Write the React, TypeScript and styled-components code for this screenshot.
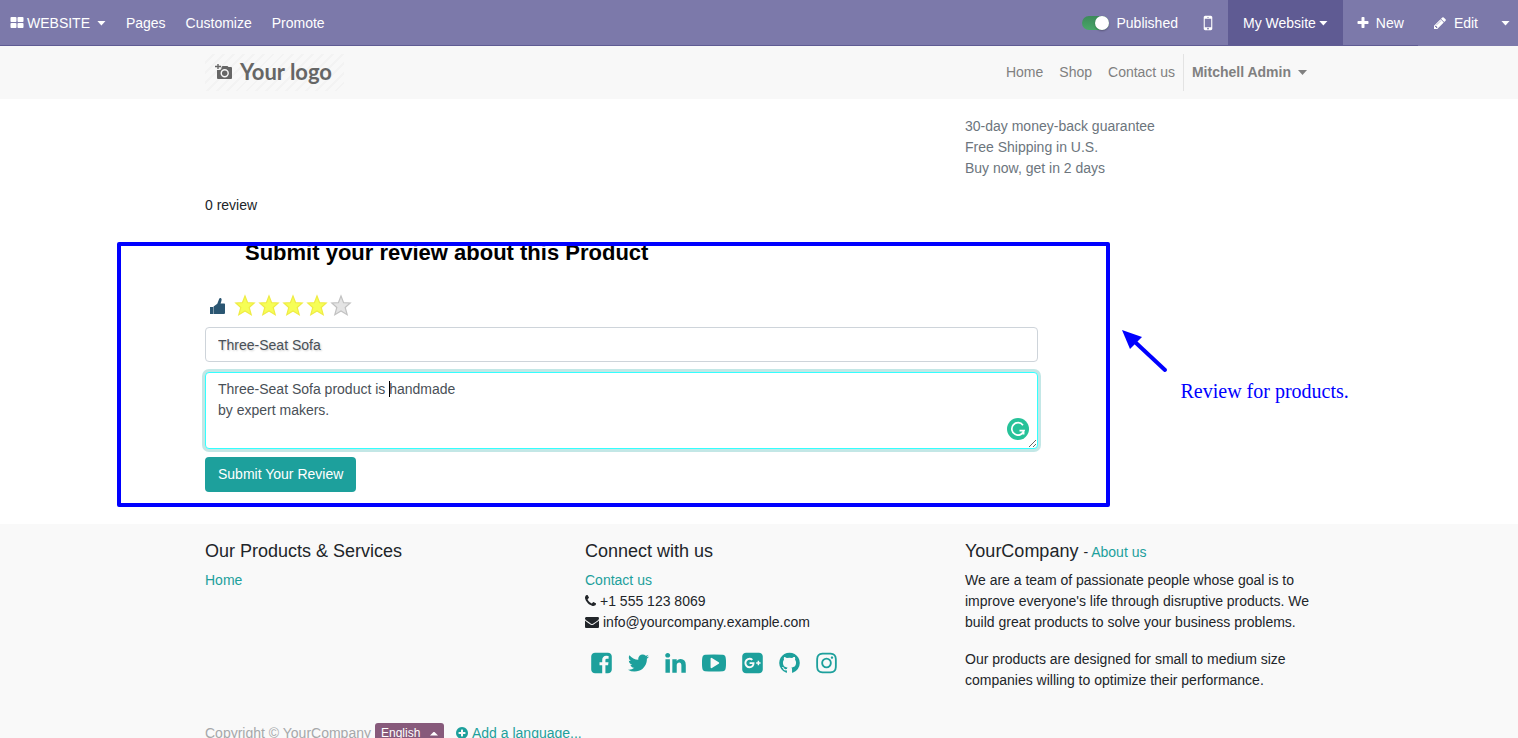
import React, { useState } from "react";
import styled, { createGlobalStyle } from "styled-components";

const sans = '"Liberation Sans", Arial, sans-serif';
const teal = "#1da09c";

const GlobalStyle = createGlobalStyle`
  *, *::before, *::after { box-sizing: border-box; }
  body {
    margin: 0;
    background: #fff;
    color: #212529;
    font: 14px/21px ${sans};
  }
  h2, h3, p, ul { margin: 0; padding: 0; font-weight: 400; }
  a { color: inherit; text-decoration: none; }
  button, input, textarea { font: inherit; margin: 0; }
`;

/* ---------- icons ---------- */

const glyphs = {
  grid: "M832 1024v384q0 52-38 90t-90 38h-512q-52 0-90-38t-38-90v-384q0-52 38-90t90-38h512q52 0 90 38t38 90zm0-768v384q0 52-38 90t-90 38h-512q-52 0-90-38t-38-90v-384q0-52 38-90t90-38h512q52 0 90 38t38 90zm896 768v384q0 52-38 90t-90 38h-512q-52 0-90-38t-38-90v-384q0-52 38-90t90-38h512q52 0 90 38t38 90zm0-768v384q0 52-38 90t-90 38h-512q-52 0-90-38t-38-90v-384q0-52 38-90t90-38h512q52 0 90 38t38 90z",
  mobile: "M976 1408q0-33-23.5-56.5t-56.5-23.5-56.5 23.5-23.5 56.5 23.5 56.5 56.5 23.5 56.5-23.5 23.5-56.5zm208-160v-704q0-13-9.5-22.5t-22.5-9.5h-512q-13 0-22.5 9.5t-9.5 22.5v704q0 13 9.5 22.5t22.5 9.5h512q13 0 22.5-9.5t9.5-22.5zm-192-848q0-16-16-16h-160q-16 0-16 16t16 16h160q16 0 16-16zm288-16v1024q0 52-38 90t-90 38h-512q-52 0-90-38t-38-90v-1024q0-52 38-90t90-38h512q52 0 90 38t38 90z",
  plus: "M1600 736v192q0 40-28 68t-68 28h-416v416q0 40-28 68t-68 28h-192q-40 0-68-28t-28-68v-416h-416q-40 0-68-28t-28-68v-192q0-40 28-68t68-28h416v-416q0-40 28-68t68-28h192q40 0 68 28t28 68v416h416q40 0 68 28t28 68z",
  pencil: "M491 1536l91-91-235-235-91 91v107h128v128h107zm523-928q0-22-22-22-10 0-17 7l-542 542q-7 7-7 17 0 22 22 22 10 0 17-7l542-542q7-7 7-17zm-54-192l416 416-832 832h-416v-416zm683 96q0 53-37 90l-166 166-416-416 166-165q36-38 90-38 53 0 91 38l235 234q37 39 37 91z",
  phone: "M1600 1240q0 27-10 70.5t-21 68.5q-21 50-122 106-94 51-186 51-27 0-53-3.5t-57.5-12.5-47-14.5-55.5-20.5-49-18q-98-35-175-83-127-79-264-216t-216-264q-48-77-83-175-3-9-18-49t-20.5-55.5-14.5-47-12.5-57.5-3.5-53q0-92 51-186 56-101 106-122 25-11 68.5-21t70.5-10q14 0 21 3 18 6 53 76 11 19 30 54t35 63.5 31 53.5q3 4 17.5 25t21.5 35.5 7 28.5q0 20-28.5 50t-62 55-62 53-28.5 46q0 9 5 22.5t8.5 20.5 14 24 11.5 19q76 137 174 235t235 174q2 1 19 11.5t24 14 20.5 8.5 22.5 5q18 0 46-28.5t53-62 55-62 50-28.5q14 0 28.5 7t35.5 21.5 25 17.5q25 15 53.5 31t63.5 35 54 30q70 35 76 53 3 7 3 21z",
  envelope: "M1792 710v794q0 66-47 113t-113 47h-1472q-66 0-113-47t-47-113v-794q44 49 101 87 362 246 497 345 57 42 92.5 65.5t94.5 48 110 24.5h2q51 0 110-24.5t94.5-48 92.5-65.5q170-123 498-345 57-39 100-87zm0-294q0 79-49 151t-122 123q-376 261-468 325-10 7-42.5 31t-54 38.5-52 32.5-57.5 27-50 9h-2q-23 0-50-9t-57.5-27-52-32.5-54-38.5-42.5-31q-91-64-262-182.5t-205-142.5q-62-42-117-115.5t-55-136.5q0-78 41.5-130t118.5-52h1472q65 0 112.5 47t47.5 113z",
  plusCircle: "M1344 960v-128q0-26-19-45t-45-19h-256v-256q0-26-19-45t-45-19h-128q-26 0-45 19t-19 45v256h-256q-26 0-45 19t-19 45v128q0 26 19 45t45 19h256v256q0 26 19 45t45 19h128q26 0 45-19t19-45v-256h256q26 0 45-19t19-45zm320-64q0 209-103 385.5t-279.5 279.5-385.5 103-385.5-103-279.5-279.5-103-385.5 103-385.5 279.5-279.5 385.5-103 385.5 103 279.5 279.5 103 385.5z",
  facebook: "M1376 128q119 0 203.5 84.5t84.5 203.5v960q0 119-84.5 203.5t-203.5 84.5h-188v-595h199l30-232h-229v-148q0-56 23.5-84t91.5-28l122-1v-207q-63-9-178-9-136 0-217.5 80t-81.5 226v171h-200v232h200v595h-532q-119 0-203.5-84.5t-84.5-203.5v-960q0-119 84.5-203.5t203.5-84.5h960z",
  twitter: "M1684 408q-67 98-162 167 1 14 1 42 0 130-38 259.5t-115.5 248.5-184.5 210.5-258 146-323 54.5q-271 0-496-145 35 4 78 4 225 0 401-138-105-2-188-64.5t-114-159.5q33 5 61 5 43 0 85-11-112-23-185.5-111.5t-73.5-205.5v-4q68 38 146 41-66-44-105-115t-39-154q0-88 44-163 121 149 294.5 238.5t371.5 99.5q-8-38-8-74 0-134 94.5-228.5t228.5-94.5q140 0 236 102 109-21 205-78-37 115-142 178 93-10 186-50z",
  linkedin: "M477 625v991h-330v-991h330zm21-306q1 73-50.5 122t-135.5 49h-2q-82 0-132-49t-50-122q0-74 51.5-122.5t134.5-48.5 133 48.5 51 122.5zm1166 729v568h-329v-530q0-105-40.5-164.5t-126.5-59.5q-63 0-105.5 34.5t-63.5 85.5q-11 30-11 81v553h-329q2-399 2-647t-1-296l-1-48h329v144h-2q20-32 41-56t56.5-52 87-43.5 114.5-15.5q171 0 275 113.5t104 332.5z",
  youtube: "M1280 896q0-37-30-54l-512-320q-31-20-65-2-33 18-33 56v640q0 38 33 56 16 8 31 8 20 0 34-10l512-320q30-17 30-54zm512 0q0 96-1 150t-8.5 136.5-22.5 147.5q-16 73-69 123t-124 58q-222 25-671 25t-671-25q-71-8-124.5-58t-69.5-123q-14-65-21.5-147.5t-8.5-136.5-1-150 1-150 8.5-136.5 22.5-147.5q16-73 69-123t124-58q222-25 671-25t671 25q71 8 124.5 58t69.5 123q14 65 21.5 147.5t8.5 136.5 1 150z",
  google: "M1045 905q0-26-6-64h-362v132h217q-3 24-16.5 50t-37.5 53-66.5 44.5-96.5 17.5q-99 0-169-71t-70-171 70-171 169-71q92 0 153 59l104-101q-108-100-257-100-160 0-272 112.5t-112 271.5 112 271.5 272 112.5q165 0 266.5-105t101.5-270zm345 46h109v-110h-109v-110h-110v110h-110v110h110v110h110v-110zm274-535v960q0 119-84.5 203.5t-203.5 84.5h-960q-119 0-203.5-84.5t-84.5-203.5v-960q0-119 84.5-203.5t203.5-84.5h960q119 0 203.5 84.5t84.5 203.5z",
  github: "M896 128q209 0 385.5 103t279.5 279.5 103 385.5q0 251-146.5 451.5t-378.5 277.5q-27 5-40-7t-13-30q0-3 .5-76.5t.5-134.5q0-97-52-142 57-6 102.5-18t94-39 81-66.5 53-105 20.5-150.5q0-119-79-206 37-91-8-204-28-9-81 11t-92 44l-38 24q-93-26-192-26t-192 26q-16-11-42.5-27t-83.5-38.5-85-13.5q-45 113-8 204-79 87-79 206 0 85 20.5 150t52.5 105 80.5 67 94 39 102.5 18q-39 36-49 103-21 10-45 15t-57 5-65.5-21.5-55.5-62.5q-19-32-48.5-52t-49.5-24l-20-3q-21 0-29 4.5t-5 11.5 9 14 13 12l7 5q22 10 43.5 38t31.5 51l10 23q13 38 44 61.5t67 30 69.5 7 55.5-3.5l23-4q0 38 .5 88.5t.5 54.5q0 18-13 30t-40 7q-232-77-378.5-277.5t-146.5-451.5q0-209 103-385.5t279.5-279.5 385.5-103z",
  instagram: "M1152 896q0-106-75-181t-181-75-181 75-75 181 75 181 181 75 181-75 75-181zm138 0q0 164-115 279t-279 115-279-115-115-279 115-279 279-115 279 115 115 279zm108-410q0 38-27 65t-65 27-65-27-27-65 27-65 65-27 65 27 27 65zm-502-220q-7 0-76.5-.5t-105.5 0-96.5 3-103 10-71.5 18.5q-50 20-88 58t-58 88q-11 29-18.5 71.5t-10 103-3 96.5 0 105.5.5 76.5-.5 76.5 0 105.5 3 96.5 10 103 18.5 71.5q20 50 58 88t88 58q29 11 71.5 18.5t103 10 96.5 3 105.5 0 76.5-.5 76.5.5 105.5 0 96.5-3 103-10 71.5-18.5q50-20 88-58t58-88q11-29 18.5-71.5t10-103 3-96.5 0-105.5-.5-76.5.5-76.5 0-105.5-3-96.5-10-103-18.5-71.5q-20-50-58-88t-88-58q-29-11-71.5-18.5t-103-10-96.5-3-105.5 0-76.5.5zm768 630q0 229-5 317-10 208-124 322t-322 124q-88 5-317 5t-317-5q-208-10-322-124t-124-322q-5-88-5-317t5-317q10-208 124-322t322-124q88-5 317-5t317 5q208 10 322 124t124 322q5 88 5 317z",
};

type GlyphName = keyof typeof glyphs;

const Svg = styled.svg`
  display: block;
  flex: none;
  overflow: visible;
`;

/* Glyphs share an 1792-unit em; `width` trims the side bearings. */
function Icon({ name, size = 14, width = size }: { name: GlyphName; size?: number; width?: number }) {
  const w = (1792 * width) / size;
  return (
    <Svg width={width} height={size} viewBox={`${(1792 - w) / 2} 0 ${w} 1792`} aria-hidden="true">
      <path d={glyphs[name]} fill="currentColor" />
    </Svg>
  );
}

const Caret = styled.span<{ $up?: boolean }>`
  width: 9px;
  height: 5px;
  flex: none;
  background: currentColor;
  clip-path: ${(p) => (p.$up ? "polygon(50% 0, 100% 100%, 0 100%)" : "polygon(0 0, 100% 0, 50% 100%)")};
`;

const SmallCaret = styled(Caret)`
  width: 8px;
  height: 4px;
`;

/* ---------- shell ---------- */

const Page = styled.div`
  height: 100vh;
  display: flex;
  flex-direction: column;
`;

const Scroller = styled.div`
  flex: 1;
  min-height: 0;
  overflow: hidden auto;
  scrollbar-width: none;
`;

const Container = styled.div`
  max-width: 1140px;
  margin: 0 auto;
  padding: 0 14px 0 16px;
`;

/* ---------- editor bar ---------- */

const EditorBar = styled.nav`
  display: flex;
  justify-content: space-between;
  flex: none;
  height: 46px;
  color: #fff;
  background: #7c79aa;
`;

const BarStart = styled.div`
  display: flex;
  flex: 1;
`;

const BarEnd = styled.div`
  display: flex;
`;

const BarFill = styled.div`
  flex: 1;
  border-bottom: 1px solid #5f5b93;
`;

const BarItem = styled.button<{ $active?: boolean; $plain?: boolean; $gap?: number; $pad?: number }>`
  display: flex;
  align-items: center;
  gap: ${(p) => p.$gap ?? 7}px;
  padding: 1px ${(p) => p.$pad ?? 10}px 0;
  border: 0;
  border-bottom: 1px solid ${(p) => (p.$plain ? "transparent" : "#5f5b93")};
  color: #fff;
  background: ${(p) => (p.$active ? "#5f5b93" : "transparent")};
  cursor: pointer;
`;

const PublishLabel = styled.label`
  display: flex;
  align-items: center;
  gap: 7px;
  padding: 1px 10px 0;
  border-bottom: 1px solid #5f5b93;
`;

const Switch = styled.input`
  appearance: none;
  position: relative;
  width: 27px;
  height: 14px;
  border-radius: 7px;
  background: linear-gradient(#3d8a5a, #48a868);
  &::after {
    content: "";
    position: absolute;
    top: 0;
    right: 0;
    width: 14px;
    height: 14px;
    border-radius: 50%;
    background: #fff;
    box-shadow: 0 1px 2px rgba(0, 0, 0, 0.3);
  }
`;

/* ---------- site header ---------- */

const SiteHeader = styled.header`
  background: #f8f8f8;
`;

const HeaderRow = styled(Container)`
  display: flex;
  justify-content: space-between;
  align-items: center;
  padding-top: 8px;
  padding-bottom: 8px;
`;

const Logo = styled.a`
  display: flex;
  align-items: center;
  gap: 7px;
  width: 139px;
  height: 37px;
  padding: 0 10px 2px;
  color: #666;
  font: 700 22px/26px Lato, ${sans};
  background: repeating-linear-gradient(-45deg, transparent 0 5px, #f3f3f3 5px 7px);
`;

const MenuList = styled.ul`
  display: flex;
  align-items: center;
  list-style: none;
  color: #808080;
`;

const MenuLink = styled.a`
  display: block;
  padding: 8px;
`;

const AccountItem = styled.li`
  border-left: 1px solid #e3e3e3;
`;

const AccountButton = styled.button`
  display: flex;
  align-items: center;
  gap: 7px;
  height: 37px;
  padding: 0 8px;
  border: 0;
  color: inherit;
  background: none;
  font-weight: 700;
`;

/* ---------- product section ---------- */

const Terms = styled.p`
  width: 350px;
  margin: 17px 0 16px auto;
  color: #6c757d;
`;

const ReviewForm = styled.form`
  position: relative;
  width: 75%;
  margin: 24px 0 32px;
`;

const FormTitle = styled.h2`
  padding-left: 40px;
  color: #000;
  font: 700 22px/26px ${sans};
`;

const Rating = styled.div`
  display: flex;
  align-items: center;
  gap: 4px;
  height: 24px;
  margin: 28px 0 9px;
  padding-left: 4px;
`;

const ThumbSlot = styled.span`
  display: flex;
  width: 22px;
`;

const StarLabel = styled.label`
  position: relative;
  display: block;
  height: 22px;
`;

const StarRadio = styled.input`
  position: absolute;
  inset: 0;
  width: 100%;
  height: 100%;
  opacity: 0;
  cursor: pointer;
`;

const Field = styled.input`
  display: block;
  width: 100%;
  padding: 6px 12px;
  border: 1px solid #ced4da;
  border-radius: 4px;
  color: #495057;
  background: #fff;
  outline: 0;
`;

const TitleInput = styled(Field)`
  height: 35px;
  text-shadow: 1px 1px 2px rgba(0, 0, 0, 0.2);
`;

const CommentBox = styled.div`
  position: relative;
  margin: 10px 0 8px;
`;

const Comment = styled(Field)`
  resize: vertical;
  border: 1px solid #33ffff;
  box-shadow: 0 0 0 3px #c3e7e6;
`;

const TextCursor = styled.span`
  position: absolute;
  top: 9px;
  left: 184px;
  width: 1px;
  height: 16px;
  background: #000;
`;

const Checker = styled.span`
  position: absolute;
  right: 9px;
  bottom: 9px;
`;

const SubmitButton = styled.button`
  display: block;
  height: 35px;
  padding: 0 13px;
  border: 0;
  border-radius: 4px;
  color: #fff;
  background: ${teal};
`;

const Highlight = styled.div`
  position: absolute;
  inset: 2px -72px -15px -88px;
  border: 4px solid #00f;
  border-radius: 2px;
  pointer-events: none;
`;

const Callout = styled.div`
  position: absolute;
  top: 89px;
  left: calc(100% + 84px);
  display: flex;
  align-items: flex-end;
  gap: 13px;
  color: #00f;
  font: 20px/24px "Liberation Serif", serif;
  white-space: nowrap;
`;

const CalloutText = styled.span`
  padding-top: 50px;
`;

const ArrowSvg = styled(Svg)`
  align-self: flex-start;
`;

/* ---------- footer ---------- */

const Footer = styled.footer`
  padding: 16px 0;
  background: #f9f9f9;
`;

const FooterColumns = styled.div`
  display: grid;
  grid-template-columns: repeat(3, 1fr);
  gap: 30px;
`;

const FooterTitle = styled.h3`
  margin-bottom: 8px;
  font-size: 18px;
  line-height: 22px;
`;

const Small = styled.small`
  font-size: 14px;
  line-height: 14px;
`;

const TealLink = styled.a`
  color: ${teal};
`;

const ContactLine = styled.p`
  display: flex;
  align-items: center;
  gap: 4px;
  ${Svg} { margin-bottom: 2px; }
`;

const Paragraph = styled.p`
  & + & { margin-top: 16px; }
`;

const Socials = styled.div`
  display: flex;
  gap: 16px;
  margin-top: 18px;
  padding-left: 6px;
  color: ${teal};
`;

const Legal = styled.div`
  display: flex;
  align-items: center;
  margin-top: 32px;
  color: #a6a8aa;
`;

const LanguageButton = styled.button`
  display: flex;
  align-items: center;
  justify-content: space-between;
  width: 69px;
  height: 21px;
  margin: 0 12px 0 4px;
  padding: 0 6px;
  border: 0;
  border-radius: 3px;
  color: #fff;
  background: #875a7b;
  font-size: 12px;
`;

const AddLanguage = styled(TealLink)`
  display: flex;
  align-items: center;
  gap: 4px;
  ${Svg} { margin-bottom: 2px; }
`;

/* ---------- drawings ---------- */

function CameraIcon() {
  return (
    <Svg width="18" height="18" viewBox="0 0 18 18" aria-hidden="true">
      <path d="M3 1v5M0 3.500h6" stroke="#666" strokeWidth="1.400" fill="none" />
      <path
        fill="#666"
        fillRule="evenodd"
        d="M6.500 4 7.500 3h5l1 1H16a1 1 0 0 1 1 1V15a1 1 0 0 1-1 1H3a1 1 0 0 1-1-1V7h2.500a2 2 0 0 0 2-2zM9.700 6a4.200 4.200 0 1 0 0 8.400 4.200 4.200 0 0 0 0-8.400z"
      />
      <circle cx="9.700" cy="10.200" r="2.700" fill="#666" />
    </Svg>
  );
}

function ThumbIcon() {
  return (
    <Svg width="18" height="18" viewBox="0 0 18 18" aria-hidden="true">
      <path
        fill="#2b5672"
        d="M1 10h3.200v7H1zM4.600 9.500 8.300 6.800l1.900-5c.4-1.200 2.500-.8 2.400.8 0 1.300-.6 2.800-1 4H15c.7 0 1 .4 1 1V15.700c0 .800-.5 1.300-1.300 1.300H4.600z"
      />
    </Svg>
  );
}

function Star({ on }: { on: boolean }) {
  return (
    <Svg width="20" height="22" viewBox="0 0 20 22" aria-hidden="true">
      <path
        d="M10 1 12.600 7.700 19.200 8 14.200 12.500 16.200 19.800 10 16 3.800 19.800 5.800 12.500.8 8 7.400 7.700z"
        fill={on ? "#f6fe56" : "#e4e4e4"}
        stroke={on ? "#efec45" : "#c2c2c2"}
        strokeWidth="1.200"
      />
    </Svg>
  );
}

function CheckerIcon() {
  return (
    <Svg width="22" height="22" viewBox="0 0 22 22" aria-hidden="true">
      <circle cx="11" cy="11" r="11" fill="#27c299" />
      <path d="M16 7.200A6.200 6.200 0 1 0 17 12.600h-4.500M16.600 12.600v4" fill="none" stroke="#fff" strokeWidth="1.700" />
    </Svg>
  );
}

function Arrow() {
  return (
    <ArrowSvg width="46" height="44" viewBox="0 0 46 44" aria-hidden="true">
      <path d="M13 13 43 41" stroke="#00f" strokeWidth="4" strokeLinecap="round" />
      <path d="M0 1 20 8 8 20z" fill="#00f" />
    </ArrowSvg>
  );
}

/* ---------- page ---------- */

const socials: { name: GlyphName; width: number; label: string }[] = [
  { name: "facebook", width: 21, label: "Facebook" },
  { name: "twitter", width: 21, label: "Twitter" },
  { name: "linkedin", width: 21, label: "LinkedIn" },
  { name: "youtube", width: 24, label: "YouTube" },
  { name: "google", width: 21, label: "Google Plus" },
  { name: "github", width: 21, label: "GitHub" },
  { name: "instagram", width: 21, label: "Instagram" },
];

export default function App() {
  const [rating, setRating] = useState(4);

  return (
    <Page>
      <GlobalStyle />
      <EditorBar>
        <BarStart>
          <BarItem type="button" $gap={3}>
            <Icon name="grid" /> WEBSITE&nbsp;<Caret />
          </BarItem>
          <BarItem type="button">Pages</BarItem>
          <BarItem type="button">Customize</BarItem>
          <BarItem type="button">Promote</BarItem>
          <BarFill />
        </BarStart>
        <BarEnd>
          <PublishLabel>
            <Switch type="checkbox" defaultChecked />
            Published
          </PublishLabel>
          <BarItem type="button" $pad={15} aria-label="Mobile preview">
            <Icon name="mobile" size={20} width={10} />
          </BarItem>
          <BarItem type="button" $active $gap={3} $pad={15}>
            My Website<Caret />
          </BarItem>
          <BarItem type="button" $pad={14}>
            <Icon name="plus" width={12} />New
          </BarItem>
          <BarItem type="button" $plain $pad={15}>
            <Icon name="pencil" />Edit
          </BarItem>
          <BarItem type="button" $plain $pad={8} aria-label="More">
            <Caret />
          </BarItem>
        </BarEnd>
      </EditorBar>

      <Scroller>
        <SiteHeader>
          <HeaderRow>
            <Logo href="#"><CameraIcon />Your logo</Logo>
            <MenuList>
              <li><MenuLink href="#">Home</MenuLink></li>
              <li><MenuLink href="#">Shop</MenuLink></li>
              <li><MenuLink href="#">Contact us</MenuLink></li>
              <AccountItem>
                <AccountButton type="button">Mitchell Admin<Caret /></AccountButton>
              </AccountItem>
            </MenuList>
          </HeaderRow>
        </SiteHeader>

        <main>
          <Container>
            <Terms>
              30-day money-back guarantee<br />
              Free Shipping in U.S.<br />
              Buy now, get in 2 days
            </Terms>
            <p>0 review</p>
            <ReviewForm onSubmit={(e) => e.preventDefault()}>
              <FormTitle>Submit your review about this Product</FormTitle>
              <Rating role="radiogroup" aria-label="Rating">
                <ThumbSlot><ThumbIcon /></ThumbSlot>
                {[1, 2, 3, 4, 5].map((n) => (
                  <StarLabel key={n}>
                    <StarRadio
                      type="radio"
                      name="rating"
                      aria-label={`${n} stars`}
                      checked={rating === n}
                      onChange={() => setRating(n)}
                    />
                    <Star on={n <= rating} />
                  </StarLabel>
                ))}
              </Rating>
              <TitleInput aria-label="Review title" defaultValue="Three-Seat Sofa" />
              <CommentBox>
                <Comment
                  as="textarea"
                  rows={3}
                  aria-label="Review"
                  defaultValue={"Three-Seat Sofa product is handmade\nby expert makers."}
                />
                <TextCursor />
                <Checker><CheckerIcon /></Checker>
              </CommentBox>
              <SubmitButton type="submit">Submit Your Review</SubmitButton>
              <Highlight />
              <Callout>
                <Arrow />
                <CalloutText>Review for products.</CalloutText>
              </Callout>
            </ReviewForm>
          </Container>
        </main>

        <Footer>
          <Container>
            <FooterColumns>
              <div>
                <FooterTitle>Our Products &amp; Services</FooterTitle>
                <TealLink href="#">Home</TealLink>
              </div>
              <div>
                <FooterTitle>Connect with us</FooterTitle>
                <p><TealLink href="#">Contact us</TealLink></p>
                <ContactLine><Icon name="phone" width={11} />+1 555 123 8069</ContactLine>
                <ContactLine><Icon name="envelope" />info@yourcompany.example.com</ContactLine>
                <Socials>
                  {socials.map((s) => (
                    <a key={s.name} href="#" aria-label={s.label}>
                      <Icon name={s.name} size={24} width={s.width} />
                    </a>
                  ))}
                </Socials>
              </div>
              <div>
                <FooterTitle>
                  YourCompany <Small>- <TealLink href="#">About us</TealLink></Small>
                </FooterTitle>
                <Paragraph>
                  We are a team of passionate people whose goal is to improve everyone's life through
                  disruptive products. We build great products to solve your business problems.
                </Paragraph>
                <Paragraph>
                  Our products are designed for small to medium size companies willing to optimize
                  their performance.
                </Paragraph>
              </div>
            </FooterColumns>
            <Legal>
              <span>Copyright © YourCompany</span>
              <LanguageButton type="button">English<SmallCaret $up /></LanguageButton>
              <AddLanguage href="#"><Icon name="plusCircle" width={12} />Add a language...</AddLanguage>
            </Legal>
          </Container>
        </Footer>
      </Scroller>
    </Page>
  );
}
